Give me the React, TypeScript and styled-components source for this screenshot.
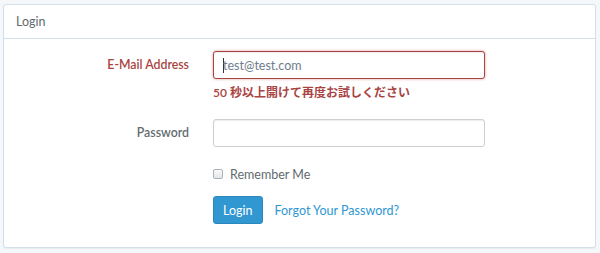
import React from "react";
import styled, { createGlobalStyle } from "styled-components";

const Global = createGlobalStyle`
  html, body { margin: 0; padding: 0; background: #f5f8fa; }
  body { font-family: Lato, "Noto Sans CJK JP", sans-serif; font-size: 12px; color: #636b6f; }
  * { box-sizing: border-box; }
`;

const Page = styled.div`
  padding: 4px 4px 0 3px;
  width: 600px;
  height: 253px;
`;

const Panel = styled.div`
  width: 593px;
  height: 244px;
  background: #fff;
  border: 1px solid #d3e0e9;
  border-radius: 3px;
  box-shadow: 0 1px 1px rgba(0,0,0,0.05);
`;

const Heading = styled.div`
  height: 34px;
  display: flex;
  align-items: center;
  padding: 0 12px;
  border-bottom: 1px solid #d3e0e9;
  font-size: 12.5px;
  color: #636b6f;
`;

const Body = styled.div`
  padding: 12px 0 0 0;
`;

const Row = styled.div<{ $mb: number }>`
  display: grid;
  grid-template-columns: 185px 272px;
  column-gap: 24px;
  align-items: start;
  margin-bottom: ${p => p.$mb}px;
`;

const Label = styled.label<{ $error?: boolean }>`
  text-align: right;
  font-size: 12.3px;
  font-weight: 600;
  line-height: 28px;
  color: ${p => (p.$error ? "#a94442" : "#636b6f")};
`;

const Control = styled.div`
  display: flex;
  flex-direction: column;
`;

const Input = styled.div<{ $error?: boolean }>`
  height: 28px;
  border: 1px solid ${p => (p.$error ? "#a94442" : "#ccd0d2")};
  border-radius: 3px;
  background: #fff;
  box-shadow: ${p =>
    p.$error
      ? "inset 0 1px 1px rgba(0,0,0,.075), 0 0 3px #d69b9a"
      : "inset 0 1px 1px rgba(0,0,0,.075)"};
  display: flex;
  align-items: center;
  padding: 0 9px;
  font-size: 12.5px;
  color: #6e7c8c;
`;

const Caret = styled.span`
  display: inline-block;
  width: 1px;
  height: 15px;
  background: #333;
  margin-right: -1px;
`;

const Help = styled.span`
  margin-top: 5px;
  font-size: 12px;
  font-weight: 600;
  color: #a94442;
  line-height: 18px;
`;

const Check = styled.label`
  display: flex;
  align-items: center;
  gap: 7px;
  font-size: 12.5px;
  color: #636b6f;
  height: 16px;
`;

const Box = styled.span`
  width: 10px;
  height: 10px;
  border: 1px solid #a9b0b8;
  border-radius: 2px;
  background: linear-gradient(#fafafa, #e4e6e8);
`;

const Actions = styled.div`
  display: flex;
  align-items: center;
  gap: 12px;
`;

const Button = styled.button`
  height: 28px;
  padding: 0 9px;
  background: #3097d1;
  border: 1px solid #2a88bd;
  border-radius: 3px;
  color: #fff;
  font-family: inherit;
  font-size: 12.5px;
`;

const Link = styled.a`
  color: #3097d1;
  font-size: 12.5px;
  text-decoration: none;
`;

export default function App() {
  return (
    <>
      <Global />
      <Page>
        <Panel>
          <Heading>Login</Heading>
          <Body>
            <Row $mb={17}>
              <Label $error>E-Mail Address</Label>
              <Control>
                <Input $error>
                  <Caret />
                  test@test.com
                </Input>
                <Help>50 秒以上開けて再度お試しください</Help>
              </Control>
            </Row>
            <Row $mb={19}>
              <Label>Password</Label>
              <Control>
                <Input />
              </Control>
            </Row>
            <Row $mb={14}>
              <span />
              <Check>
                <Box />
                Remember Me
              </Check>
            </Row>
            <Row $mb={0}>
              <span />
              <Actions>
                <Button>Login</Button>
                <Link href="#">Forgot Your Password?</Link>
              </Actions>
            </Row>
          </Body>
        </Panel>
      </Page>
    </>
  );
}
